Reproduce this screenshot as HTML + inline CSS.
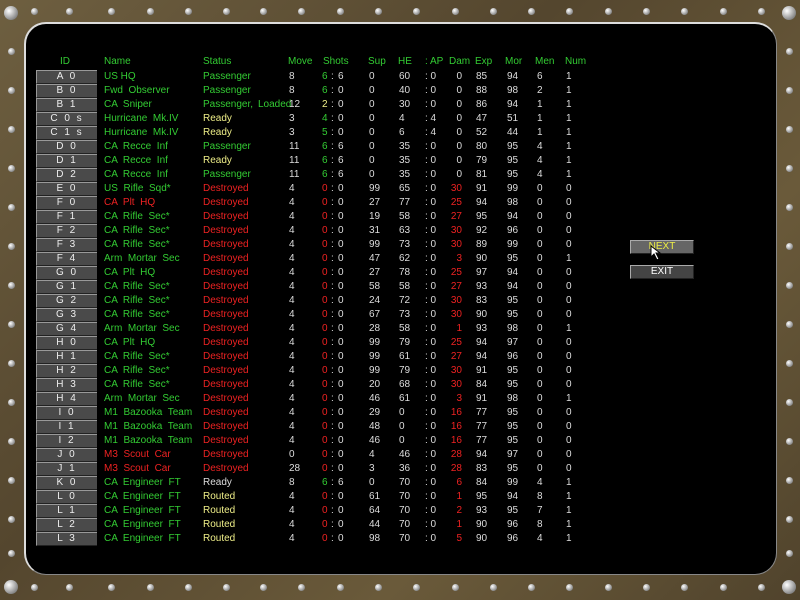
<!DOCTYPE html>
<html><head><meta charset="utf-8"><style>
body{margin:0;width:800px;height:600px;overflow:hidden;background:#5e5034;font-family:"Liberation Sans",sans-serif;}
#fr{position:absolute;left:0;top:0;width:800px;height:600px;background:linear-gradient(135deg,#6e5f40,#54462e 40%,#6a5a3a 70%,#50432c);}
#pn{position:absolute;left:24px;top:22px;width:753px;height:553px;background:#000;border-radius:22px;border-left:2px solid #ddd;border-top:2px solid #ddd;border-right:1px solid #888;border-bottom:1px solid #888;box-sizing:border-box;}
.bt{position:absolute;width:7px;height:7px;border-radius:50%;background:radial-gradient(circle at 35% 35%,#fff,#aaa 50%,#555);}
.bb{width:14px;height:14px;}
.h,.r i,.r b{position:absolute;font-size:10px;line-height:13px;font-style:normal;font-weight:normal;white-space:pre;}
.h{color:#3c3;top:55px;}
.r{position:absolute;left:0;width:800px;height:13px;}
.r b{left:36px;width:60px;height:12px;background:#4a4a4a;border-top:1px solid #999;border-left:1px solid #999;border-bottom:1px solid #222;color:#eee;text-align:center;line-height:12px;letter-spacing:2px;}
.r i{color:#ddd;}
.n{left:104px;color:#3c3!important}.s{left:203px;color:#3c3!important}
.m{left:289px}.sl{left:322px;color:#3c3!important}.co{left:331px}.sr{left:338px}
.su{left:369px}.he{left:399px}.ap{left:425px}.dm{left:442px;width:20px;text-align:right}
.ex{left:476px}.mo{left:507px}.me{left:537px}.nu{left:566px}
.r i.R{color:#e22!important}.r i.Y{color:#ee8!important}.r i.W{color:#ddd!important}
.btn{position:absolute;left:630px;width:62px;height:12px;background:#666;border-top:1px solid #aaa;border-left:1px solid #aaa;border-bottom:1px solid #222;border-right:1px solid #222;color:#fff;font-size:10px;line-height:12px;text-align:center;}
</style></head><body>
<div id="fr"></div>
<div id="pn"></div>
<div class="bt bb" style="left:4px;top:6px"></div>
<div class="bt" style="left:31px;top:8px"></div><div class="bt" style="left:66px;top:8px"></div><div class="bt" style="left:108px;top:8px"></div><div class="bt" style="left:147px;top:8px"></div><div class="bt" style="left:185px;top:8px"></div><div class="bt" style="left:223px;top:8px"></div><div class="bt" style="left:260px;top:8px"></div><div class="bt" style="left:298px;top:8px"></div><div class="bt" style="left:337px;top:8px"></div><div class="bt" style="left:375px;top:8px"></div><div class="bt" style="left:413px;top:8px"></div><div class="bt" style="left:452px;top:8px"></div><div class="bt" style="left:490px;top:8px"></div><div class="bt" style="left:528px;top:8px"></div><div class="bt" style="left:566px;top:8px"></div><div class="bt" style="left:605px;top:8px"></div><div class="bt" style="left:643px;top:8px"></div><div class="bt" style="left:681px;top:8px"></div><div class="bt" style="left:720px;top:8px"></div><div class="bt" style="left:758px;top:8px"></div>
<div class="bt bb" style="left:782px;top:6px"></div>
<div class="bt bb" style="left:4px;top:580px"></div>
<div class="bt" style="left:31px;top:584px"></div><div class="bt" style="left:66px;top:584px"></div><div class="bt" style="left:108px;top:584px"></div><div class="bt" style="left:147px;top:584px"></div><div class="bt" style="left:185px;top:584px"></div><div class="bt" style="left:223px;top:584px"></div><div class="bt" style="left:260px;top:584px"></div><div class="bt" style="left:298px;top:584px"></div><div class="bt" style="left:337px;top:584px"></div><div class="bt" style="left:375px;top:584px"></div><div class="bt" style="left:413px;top:584px"></div><div class="bt" style="left:452px;top:584px"></div><div class="bt" style="left:490px;top:584px"></div><div class="bt" style="left:528px;top:584px"></div><div class="bt" style="left:566px;top:584px"></div><div class="bt" style="left:605px;top:584px"></div><div class="bt" style="left:643px;top:584px"></div><div class="bt" style="left:681px;top:584px"></div><div class="bt" style="left:720px;top:584px"></div><div class="bt" style="left:758px;top:584px"></div>
<div class="bt bb" style="left:782px;top:580px"></div>
<div class="bt" style="left:8px;top:48px"></div><div class="bt" style="left:8px;top:87px"></div><div class="bt" style="left:8px;top:126px"></div><div class="bt" style="left:8px;top:165px"></div><div class="bt" style="left:8px;top:204px"></div><div class="bt" style="left:8px;top:243px"></div><div class="bt" style="left:8px;top:282px"></div><div class="bt" style="left:8px;top:321px"></div><div class="bt" style="left:8px;top:360px"></div><div class="bt" style="left:8px;top:399px"></div><div class="bt" style="left:8px;top:438px"></div><div class="bt" style="left:8px;top:477px"></div><div class="bt" style="left:8px;top:516px"></div><div class="bt" style="left:8px;top:550px"></div>
<div class="bt" style="left:786px;top:48px"></div><div class="bt" style="left:786px;top:87px"></div><div class="bt" style="left:786px;top:126px"></div><div class="bt" style="left:786px;top:165px"></div><div class="bt" style="left:786px;top:204px"></div><div class="bt" style="left:786px;top:243px"></div><div class="bt" style="left:786px;top:282px"></div><div class="bt" style="left:786px;top:321px"></div><div class="bt" style="left:786px;top:360px"></div><div class="bt" style="left:786px;top:399px"></div><div class="bt" style="left:786px;top:438px"></div><div class="bt" style="left:786px;top:477px"></div><div class="bt" style="left:786px;top:516px"></div><div class="bt" style="left:786px;top:550px"></div>

<div class="h" style="left:60px">ID</div><div class="h" style="left:104px">Name</div><div class="h" style="left:203px">Status</div><div class="h" style="left:288px">Move</div><div class="h" style="left:323px">Shots</div><div class="h" style="left:368px">Sup</div><div class="h" style="left:398px">HE</div><div class="h" style="left:425px">: AP</div><div class="h" style="left:449px">Dam</div><div class="h" style="left:475px">Exp</div><div class="h" style="left:505px">Mor</div><div class="h" style="left:535px">Men</div><div class="h" style="left:565px">Num</div>

<div class="r" style="top:70px"><b>A 0</b><i class="n">US HQ</i><i class="s">Passenger</i><i class="m">8</i><i class="sl">6</i><i class="co">:</i><i class="sr">6</i><i class="su">0</i><i class="he">60</i><i class="ap">: 0</i><i class="dm">0</i><i class="ex">85</i><i class="mo">94</i><i class="me">6</i><i class="nu">1</i></div>
<div class="r" style="top:84px"><b>B 0</b><i class="n">Fwd  Observer</i><i class="s">Passenger</i><i class="m">8</i><i class="sl">6</i><i class="co">:</i><i class="sr">0</i><i class="su">0</i><i class="he">40</i><i class="ap">: 0</i><i class="dm">0</i><i class="ex">88</i><i class="mo">98</i><i class="me">2</i><i class="nu">1</i></div>
<div class="r" style="top:98px"><b>B 1</b><i class="n">CA  Sniper</i><i class="s">Passenger,</i><i class="s" style="left:258px">Loaded</i><i class="m">12</i><i class="sl Y">2</i><i class="co">:</i><i class="sr">0</i><i class="su">0</i><i class="he">30</i><i class="ap">: 0</i><i class="dm">0</i><i class="ex">86</i><i class="mo">94</i><i class="me">1</i><i class="nu">1</i></div>
<div class="r" style="top:112px"><b>C 0 s</b><i class="n">Hurricane  Mk.IV</i><i class="s Y">Ready</i><i class="m">3</i><i class="sl">4</i><i class="co">:</i><i class="sr">0</i><i class="su">0</i><i class="he">4</i><i class="ap">: 4</i><i class="dm">0</i><i class="ex">47</i><i class="mo">51</i><i class="me">1</i><i class="nu">1</i></div>
<div class="r" style="top:126px"><b>C 1 s</b><i class="n">Hurricane  Mk.IV</i><i class="s Y">Ready</i><i class="m">3</i><i class="sl">5</i><i class="co">:</i><i class="sr">0</i><i class="su">0</i><i class="he">6</i><i class="ap">: 4</i><i class="dm">0</i><i class="ex">52</i><i class="mo">44</i><i class="me">1</i><i class="nu">1</i></div>
<div class="r" style="top:140px"><b>D 0</b><i class="n">CA  Recce  Inf</i><i class="s">Passenger</i><i class="m">11</i><i class="sl">6</i><i class="co">:</i><i class="sr">6</i><i class="su">0</i><i class="he">35</i><i class="ap">: 0</i><i class="dm">0</i><i class="ex">80</i><i class="mo">95</i><i class="me">4</i><i class="nu">1</i></div>
<div class="r" style="top:154px"><b>D 1</b><i class="n">CA  Recce  Inf</i><i class="s Y">Ready</i><i class="m">11</i><i class="sl">6</i><i class="co">:</i><i class="sr">6</i><i class="su">0</i><i class="he">35</i><i class="ap">: 0</i><i class="dm">0</i><i class="ex">79</i><i class="mo">95</i><i class="me">4</i><i class="nu">1</i></div>
<div class="r" style="top:168px"><b>D 2</b><i class="n">CA  Recce  Inf</i><i class="s">Passenger</i><i class="m">11</i><i class="sl">6</i><i class="co">:</i><i class="sr">6</i><i class="su">0</i><i class="he">35</i><i class="ap">: 0</i><i class="dm">0</i><i class="ex">81</i><i class="mo">95</i><i class="me">4</i><i class="nu">1</i></div>
<div class="r" style="top:182px"><b>E 0</b><i class="n">US  Rifle  Sqd*</i><i class="s R">Destroyed</i><i class="m">4</i><i class="sl R">0</i><i class="co">:</i><i class="sr">0</i><i class="su">99</i><i class="he">65</i><i class="ap">: 0</i><i class="dm R">30</i><i class="ex">91</i><i class="mo">99</i><i class="me">0</i><i class="nu">0</i></div>
<div class="r" style="top:196px"><b>F 0</b><i class="n R">CA  Plt  HQ</i><i class="s R">Destroyed</i><i class="m">4</i><i class="sl R">0</i><i class="co">:</i><i class="sr">0</i><i class="su">27</i><i class="he">77</i><i class="ap">: 0</i><i class="dm R">25</i><i class="ex">94</i><i class="mo">98</i><i class="me">0</i><i class="nu">0</i></div>
<div class="r" style="top:210px"><b>F 1</b><i class="n">CA  Rifle  Sec*</i><i class="s R">Destroyed</i><i class="m">4</i><i class="sl R">0</i><i class="co">:</i><i class="sr">0</i><i class="su">19</i><i class="he">58</i><i class="ap">: 0</i><i class="dm R">27</i><i class="ex">95</i><i class="mo">94</i><i class="me">0</i><i class="nu">0</i></div>
<div class="r" style="top:224px"><b>F 2</b><i class="n">CA  Rifle  Sec*</i><i class="s R">Destroyed</i><i class="m">4</i><i class="sl R">0</i><i class="co">:</i><i class="sr">0</i><i class="su">31</i><i class="he">63</i><i class="ap">: 0</i><i class="dm R">30</i><i class="ex">92</i><i class="mo">96</i><i class="me">0</i><i class="nu">0</i></div>
<div class="r" style="top:238px"><b>F 3</b><i class="n">CA  Rifle  Sec*</i><i class="s R">Destroyed</i><i class="m">4</i><i class="sl R">0</i><i class="co">:</i><i class="sr">0</i><i class="su">99</i><i class="he">73</i><i class="ap">: 0</i><i class="dm R">30</i><i class="ex">89</i><i class="mo">99</i><i class="me">0</i><i class="nu">0</i></div>
<div class="r" style="top:252px"><b>F 4</b><i class="n">Arm  Mortar  Sec</i><i class="s R">Destroyed</i><i class="m">4</i><i class="sl R">0</i><i class="co">:</i><i class="sr">0</i><i class="su">47</i><i class="he">62</i><i class="ap">: 0</i><i class="dm R">3</i><i class="ex">90</i><i class="mo">95</i><i class="me">0</i><i class="nu">1</i></div>
<div class="r" style="top:266px"><b>G 0</b><i class="n">CA  Plt  HQ</i><i class="s R">Destroyed</i><i class="m">4</i><i class="sl R">0</i><i class="co">:</i><i class="sr">0</i><i class="su">27</i><i class="he">78</i><i class="ap">: 0</i><i class="dm R">25</i><i class="ex">97</i><i class="mo">94</i><i class="me">0</i><i class="nu">0</i></div>
<div class="r" style="top:280px"><b>G 1</b><i class="n">CA  Rifle  Sec*</i><i class="s R">Destroyed</i><i class="m">4</i><i class="sl R">0</i><i class="co">:</i><i class="sr">0</i><i class="su">58</i><i class="he">58</i><i class="ap">: 0</i><i class="dm R">27</i><i class="ex">93</i><i class="mo">94</i><i class="me">0</i><i class="nu">0</i></div>
<div class="r" style="top:294px"><b>G 2</b><i class="n">CA  Rifle  Sec*</i><i class="s R">Destroyed</i><i class="m">4</i><i class="sl R">0</i><i class="co">:</i><i class="sr">0</i><i class="su">24</i><i class="he">72</i><i class="ap">: 0</i><i class="dm R">30</i><i class="ex">83</i><i class="mo">95</i><i class="me">0</i><i class="nu">0</i></div>
<div class="r" style="top:308px"><b>G 3</b><i class="n">CA  Rifle  Sec*</i><i class="s R">Destroyed</i><i class="m">4</i><i class="sl R">0</i><i class="co">:</i><i class="sr">0</i><i class="su">67</i><i class="he">73</i><i class="ap">: 0</i><i class="dm R">30</i><i class="ex">90</i><i class="mo">95</i><i class="me">0</i><i class="nu">0</i></div>
<div class="r" style="top:322px"><b>G 4</b><i class="n">Arm  Mortar  Sec</i><i class="s R">Destroyed</i><i class="m">4</i><i class="sl R">0</i><i class="co">:</i><i class="sr">0</i><i class="su">28</i><i class="he">58</i><i class="ap">: 0</i><i class="dm R">1</i><i class="ex">93</i><i class="mo">98</i><i class="me">0</i><i class="nu">1</i></div>
<div class="r" style="top:336px"><b>H 0</b><i class="n">CA  Plt  HQ</i><i class="s R">Destroyed</i><i class="m">4</i><i class="sl R">0</i><i class="co">:</i><i class="sr">0</i><i class="su">99</i><i class="he">79</i><i class="ap">: 0</i><i class="dm R">25</i><i class="ex">94</i><i class="mo">97</i><i class="me">0</i><i class="nu">0</i></div>
<div class="r" style="top:350px"><b>H 1</b><i class="n">CA  Rifle  Sec*</i><i class="s R">Destroyed</i><i class="m">4</i><i class="sl R">0</i><i class="co">:</i><i class="sr">0</i><i class="su">99</i><i class="he">61</i><i class="ap">: 0</i><i class="dm R">27</i><i class="ex">94</i><i class="mo">96</i><i class="me">0</i><i class="nu">0</i></div>
<div class="r" style="top:364px"><b>H 2</b><i class="n">CA  Rifle  Sec*</i><i class="s R">Destroyed</i><i class="m">4</i><i class="sl R">0</i><i class="co">:</i><i class="sr">0</i><i class="su">99</i><i class="he">79</i><i class="ap">: 0</i><i class="dm R">30</i><i class="ex">91</i><i class="mo">95</i><i class="me">0</i><i class="nu">0</i></div>
<div class="r" style="top:378px"><b>H 3</b><i class="n">CA  Rifle  Sec*</i><i class="s R">Destroyed</i><i class="m">4</i><i class="sl R">0</i><i class="co">:</i><i class="sr">0</i><i class="su">20</i><i class="he">68</i><i class="ap">: 0</i><i class="dm R">30</i><i class="ex">84</i><i class="mo">95</i><i class="me">0</i><i class="nu">0</i></div>
<div class="r" style="top:392px"><b>H 4</b><i class="n">Arm  Mortar  Sec</i><i class="s R">Destroyed</i><i class="m">4</i><i class="sl R">0</i><i class="co">:</i><i class="sr">0</i><i class="su">46</i><i class="he">61</i><i class="ap">: 0</i><i class="dm R">3</i><i class="ex">91</i><i class="mo">98</i><i class="me">0</i><i class="nu">1</i></div>
<div class="r" style="top:406px"><b>I 0</b><i class="n">M1  Bazooka  Team</i><i class="s R">Destroyed</i><i class="m">4</i><i class="sl R">0</i><i class="co">:</i><i class="sr">0</i><i class="su">29</i><i class="he">0</i><i class="ap">: 0</i><i class="dm R">16</i><i class="ex">77</i><i class="mo">95</i><i class="me">0</i><i class="nu">0</i></div>
<div class="r" style="top:420px"><b>I 1</b><i class="n">M1  Bazooka  Team</i><i class="s R">Destroyed</i><i class="m">4</i><i class="sl R">0</i><i class="co">:</i><i class="sr">0</i><i class="su">48</i><i class="he">0</i><i class="ap">: 0</i><i class="dm R">16</i><i class="ex">77</i><i class="mo">95</i><i class="me">0</i><i class="nu">0</i></div>
<div class="r" style="top:434px"><b>I 2</b><i class="n">M1  Bazooka  Team</i><i class="s R">Destroyed</i><i class="m">4</i><i class="sl R">0</i><i class="co">:</i><i class="sr">0</i><i class="su">46</i><i class="he">0</i><i class="ap">: 0</i><i class="dm R">16</i><i class="ex">77</i><i class="mo">95</i><i class="me">0</i><i class="nu">0</i></div>
<div class="r" style="top:448px"><b>J 0</b><i class="n R">M3  Scout  Car</i><i class="s R">Destroyed</i><i class="m">0</i><i class="sl R">0</i><i class="co">:</i><i class="sr">0</i><i class="su">4</i><i class="he">46</i><i class="ap">: 0</i><i class="dm R">28</i><i class="ex">94</i><i class="mo">97</i><i class="me">0</i><i class="nu">0</i></div>
<div class="r" style="top:462px"><b>J 1</b><i class="n R">M3  Scout  Car</i><i class="s R">Destroyed</i><i class="m">28</i><i class="sl R">0</i><i class="co">:</i><i class="sr">0</i><i class="su">3</i><i class="he">36</i><i class="ap">: 0</i><i class="dm R">28</i><i class="ex">83</i><i class="mo">95</i><i class="me">0</i><i class="nu">0</i></div>
<div class="r" style="top:476px"><b>K 0</b><i class="n">CA  Engineer  FT</i><i class="s W">Ready</i><i class="m">8</i><i class="sl">6</i><i class="co">:</i><i class="sr">6</i><i class="su">0</i><i class="he">70</i><i class="ap">: 0</i><i class="dm R">6</i><i class="ex">84</i><i class="mo">99</i><i class="me">4</i><i class="nu">1</i></div>
<div class="r" style="top:490px"><b>L 0</b><i class="n">CA  Engineer  FT</i><i class="s Y">Routed</i><i class="m">4</i><i class="sl R">0</i><i class="co">:</i><i class="sr">0</i><i class="su">61</i><i class="he">70</i><i class="ap">: 0</i><i class="dm R">1</i><i class="ex">95</i><i class="mo">94</i><i class="me">8</i><i class="nu">1</i></div>
<div class="r" style="top:504px"><b>L 1</b><i class="n">CA  Engineer  FT</i><i class="s Y">Routed</i><i class="m">4</i><i class="sl R">0</i><i class="co">:</i><i class="sr">0</i><i class="su">64</i><i class="he">70</i><i class="ap">: 0</i><i class="dm R">2</i><i class="ex">93</i><i class="mo">95</i><i class="me">7</i><i class="nu">1</i></div>
<div class="r" style="top:518px"><b>L 2</b><i class="n">CA  Engineer  FT</i><i class="s Y">Routed</i><i class="m">4</i><i class="sl R">0</i><i class="co">:</i><i class="sr">0</i><i class="su">44</i><i class="he">70</i><i class="ap">: 0</i><i class="dm R">1</i><i class="ex">90</i><i class="mo">96</i><i class="me">8</i><i class="nu">1</i></div>
<div class="r" style="top:532px"><b>L 3</b><i class="n">CA  Engineer  FT</i><i class="s Y">Routed</i><i class="m">4</i><i class="sl R">0</i><i class="co">:</i><i class="sr">0</i><i class="su">98</i><i class="he">70</i><i class="ap">: 0</i><i class="dm R">5</i><i class="ex">90</i><i class="mo">96</i><i class="me">4</i><i class="nu">1</i></div>

<div class="btn" style="top:240px;color:#ee4">NEXT</div>
<div class="btn" style="top:265px;background:#444">EXIT</div>
<svg style="position:absolute;left:650px;top:245px" width="12" height="16"><path d="M1 1 L1 12 L4 9 L7 15 L9 14 L6 8 L10 8 Z" fill="#fff" stroke="#000" stroke-width="1"/></svg>
</body></html>
